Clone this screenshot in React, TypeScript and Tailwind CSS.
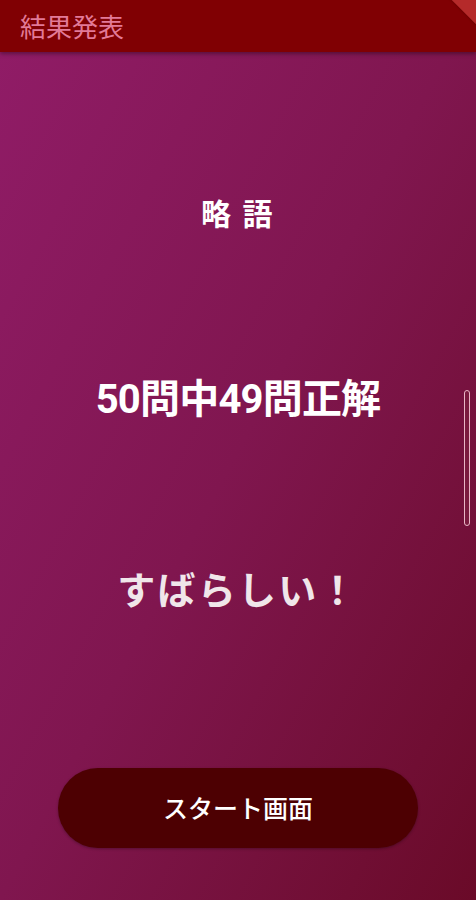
const font = "font-['Roboto','Noto_Sans_CJK_JP',sans-serif]";

const App = () => {
  return (
    <div
      className={`w-[476px] h-[900px] relative overflow-hidden flex flex-col bg-gradient-to-br from-[#911c68] via-[#80164f] to-[#6a0a28] ${font}`}
    >
      <header className="h-[52px] shrink-0 bg-[#800003] flex items-center px-5 relative z-10 shadow-[0_2px_4px_rgba(0,0,0,0.35)] overflow-hidden">
        <span className="text-[26px] leading-none text-[#e27a98] font-['Noto_Sans_CJK_JP',sans-serif]">
          結果発表
        </span>
        <div className="absolute -top-[22px] -right-[22px] w-[40px] h-[40px] rotate-45 bg-[#b52a2a] shadow-[-2px_0_3px_rgba(0,0,0,0.3)]" />
      </header>

      <main className="flex-1 flex flex-col items-center">
        <div className="mt-[138px] text-[30px] leading-[45px] font-bold text-white tracking-[0.08em] font-['Noto_Sans_CJK_JP',sans-serif]">
          略 語
        </div>
        <div className="mt-[135px] text-[40px] leading-[60px] font-bold text-white tracking-[-0.02em]">
          50問中49問正解
        </div>
        <div className="mt-[129px] text-[38px] leading-[57px] font-bold text-[#f0e6ea] tracking-[0.06em] font-['Noto_Sans_CJK_JP',sans-serif]">
          すばらしい！
        </div>
        <button className="mt-[152px] w-[360px] h-[80px] rounded-[40px] bg-[#4d0002] text-white text-[25px] font-medium font-['Noto_Sans_CJK_JP',sans-serif] shadow-[0_1px_3px_rgba(0,0,0,0.3)]">
          スタート画面
        </button>
      </main>

      <div className="absolute right-[6px] top-[390px] w-[6px] h-[136px] rounded-full border border-[#e9b6c6] bg-[#7a1a3e]" />
    </div>
  );
};

export default App;
